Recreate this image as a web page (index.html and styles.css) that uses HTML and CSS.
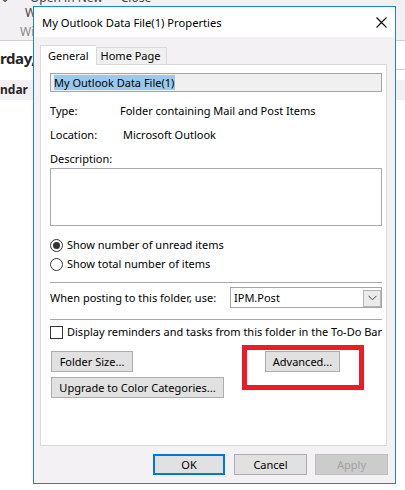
FILE: index.html
```html
<!DOCTYPE html>
<html>
<head>
<meta charset="utf-8">
<link rel="stylesheet" href="styles.css">
</head>
<body>
<div class="bg">
  <div class="bg-top">
    <div class="rb-row rb1"><span class="rb-a">⌄</span><span class="rb-b">Open in New</span><span class="rb-c">Close</span></div>
    <div class="rb-row rb2">W</div>
    <div class="rb-row rb3">Wi</div>
  </div>
  <div class="bg-date"><span class="date">rday,</span><div class="date-right"></div></div>
  <div class="bg-band"><span>ndar</span></div>
</div>

<div class="dialog">
  <div class="titlebar">
    <span class="title">My Outlook Data File(1) Properties</span>
    <svg class="close" width="11" height="11" viewBox="0 0 11 11"><path d="M0.5 0.5 L10.5 10.5 M10.5 0.5 L0.5 10.5" stroke="#000" stroke-width="1.1" fill="none"/></svg>
  </div>
  <div class="body">
    <div class="tabs">
      <div class="tab tab-active">General</div>
      <div class="tab tab-home">Home Page</div>
    </div>
    <div class="panel">
      <div class="namefield"><span class="sel">My Outlook Data File(1)</span></div>
      <div class="info-row r-type"><span class="lbl">Type:</span><span>Folder containing Mail and Post Items</span></div>
      <div class="info-row r-loc"><span class="lbl">Location:</span><span class="v-loc">Microsoft Outlook</span></div>
      <div class="info-row r-desc"><span>Description:</span></div>
      <div class="descbox"></div>
      <div class="radio-row r-rad1"><span class="radio on"><span class="dot"></span></span><span>Show number of unread items</span></div>
      <div class="radio-row r-rad2"><span class="radio"></span><span>Show total number of items</span></div>
      <div class="sep s1"></div>
      <div class="post-row">
        <span>When posting to this folder, use:</span>
        <div class="combo"><span class="combo-val">IPM.Post</span>
          <span class="combo-btn"><svg width="9" height="6" viewBox="0 0 9 6"><path d="M0.5 0.8 L4.5 4.8 L8.5 0.8" stroke="#444" stroke-width="1" fill="none"/></svg></span>
        </div>
      </div>
      <div class="sep s2"></div>
      <div class="check-row"><span class="checkbox"></span><span>Display reminders and tasks from this folder in the To-Do Bar</span></div>
      <div class="btn-row">
        <button class="btn b-size">Folder Size...</button>
        <button class="btn b-adv">Advanced...</button>
      </div>
      <button class="btn b-up">Upgrade to Color Categories...</button>
    </div>
  </div>
  <div class="footer">
    <button class="btn b-ok">OK</button>
    <button class="btn b-cancel">Cancel</button>
    <button class="btn b-apply">Apply</button>
  </div>
  <div class="redbox"></div>
</div>
</body>
</html>
```
FILE: styles.css
```css
html, body {
  margin: 0;
  padding: 0;
}
body {
  width: 405px;
  height: 490px;
  overflow: hidden;
  position: relative;
  background: #fff;
  font-family: "Noto Sans", "Segoe UI", sans-serif;
  font-size: 11px;
  color: #000;
}
.bg-top {
  height: 40px;
  background: #f3f0f3;
  border-bottom: 1px solid #d2cfd2;
  overflow: hidden;
}
.rb-row {
  height: 14px;
  line-height: 14px;
  white-space: nowrap;
  color: #444;
  font-size: 12px;
}
.rb1 {
  margin-top: -9px;
  display: flex;
}
.rb-b { margin-left: 20px; }
.rb-c { margin-left: 18px; }
.rb2 {
  margin-top: 1px;
  padding-left: 25px;
  color: #444;
}
.rb3 {
  margin-top: 5px;
  padding-left: 20px;
  color: #8a8a8a;
}
.bg-date {
  height: 39px;
  display: flex;
  align-items: flex-start;
}
.date {
  font-weight: bold;
  font-size: 15px;
  line-height: 20px;
  margin-top: 7px;
  letter-spacing: -0.4px;
  color: #262626;
  white-space: nowrap;
  width: 34px;
  overflow: hidden;
  flex: none;
}
.date-right {
  flex: 1;
  height: 28px;
  border-bottom: 1px solid #d2cfd2;
}
.bg-band {
  height: 20px;
  background: #f3f0f3;
  line-height: 20px;
  font-weight: bold;
  font-size: 12px;
  color: #262626;
}

/* dialog */
.dialog {
  position: absolute;
  left: 33px;
  top: 6px;
  width: 363px;
  height: 478px;
  box-sizing: border-box;
  border: 1px solid #1883d7;
  background: #f4f1f4;
}
.titlebar {
  height: 30px;
  background: #fff;
  display: flex;
  align-items: center;
  padding-left: 8px;
}
.title {
  font-size: 11.2px;
  line-height: 16px;
  margin-top: 1px;
}
.close {
  margin-left: auto;
  margin-right: 8px;
  display: block;
}
.body {
  padding: 8px 8px 0 6px;
}
.tabs {
  display: flex;
  align-items: flex-end;
  height: 20px;
  margin-bottom: -1px;
  position: relative;
  z-index: 1;
}
.tab {
  box-sizing: border-box;
  border: 1px solid #d9d9d9;
  border-bottom: none;
  background: #f0f0f0;
  height: 17px;
  line-height: 16px;
  margin-bottom: 1px;
  white-space: nowrap;
}
.tab-home {
  padding: 0 5px 0 4px;
}
.tab-active {
  height: 20px;
  margin-bottom: 0;
  background: #fff;
  padding: 0 7px 0 7px;
  line-height: 19px;
  border-right: none;
}
.panel {
  height: 382px;
  box-sizing: border-box;
  border: 1px solid #d9d9d9;
  background: #fff;
  padding: 8px 4px 0 9px;
}
.namefield {
  height: 19px;
  box-sizing: border-box;
  border: 1px solid #a5a5a5;
  background: #f0f0f0;
  padding-left: 3px;
  display: flex;
  align-items: center;
}
.sel {
  background: #99c9ef;
  line-height: 15px;
  padding-right: 1px;
}
.info-row {
  height: 16px;
  line-height: 16px;
  display: flex;
  white-space: nowrap;
}
.lbl {
  width: 70px;
  flex: none;
}
.v-loc { padding-left: 3px; }
.r-type { margin-top: 11px; }
.r-loc { margin-top: 8px; }
.r-desc { margin-top: 8px; }
.descbox {
  margin-top: 1px;
  height: 58px;
  box-sizing: border-box;
  border: 1px solid #a9a9b2;
  background: #fff;
}
.radio-row {
  height: 16px;
  line-height: 16px;
  display: flex;
  align-items: center;
  white-space: nowrap;
}
.r-rad1 { margin-top: 11px; }
.r-rad2 { margin-top: 3px; }
.radio {
  width: 13px;
  height: 13px;
  box-sizing: border-box;
  border: 1px solid #333;
  border-radius: 50%;
  margin-right: 4px;
  display: flex;
  align-items: center;
  justify-content: center;
  background: #fff;
  flex: none;
}
.dot {
  width: 7px;
  height: 7px;
  border-radius: 50%;
  background: #333;
}
.sep {
  height: 1px;
  background: #a8a8a8;
}
.s1 { margin-top: 10px; }
.s2 { margin-top: 11px; }
.post-row {
  margin-top: 4px;
  height: 21px;
  display: flex;
  align-items: center;
  white-space: nowrap;
}
.combo {
  margin-left: auto;
  width: 152px;
  height: 21px;
  box-sizing: border-box;
  border: 1px solid #a5a5a5;
  background: #fff;
  display: flex;
  align-items: center;
  padding-left: 3px;
}
.combo-val { flex: 1; }
.combo-btn {
  width: 18px;
  height: 17px;
  box-sizing: border-box;
  border: 1px solid #b4b4b4;
  background: #ebebeb;
  display: flex;
  align-items: center;
  justify-content: center;
  margin-top: 1px;
}
.combo-btn svg { display: block; }
.check-row {
  margin-top: 4px;
  height: 16px;
  line-height: 16px;
  display: flex;
  align-items: center;
  white-space: nowrap;
}
.checkbox {
  width: 13px;
  height: 13px;
  box-sizing: border-box;
  border: 1px solid #333;
  background: #fff;
  margin-right: 4px;
  flex: none;
}
.btn {
  height: 21px;
  box-sizing: border-box;
  border: 1px solid #adadad;
  background: #e1e1e1;
  font-family: "Noto Sans", "Segoe UI", sans-serif;
  font-size: 11px;
  color: #000;
  padding: 0;
  margin: 0;
  line-height: 18px;
  display: block;
}
.btn-row {
  margin-top: 11px;
  display: flex;
}
.b-size {
  width: 82px;
  margin-left: 1px;
}
.b-adv {
  width: 75px;
  margin-left: 132px;
}
.b-up {
  width: 173px;
  margin-left: 1px;
  margin-top: 5px;
}
.footer {
  display: flex;
  justify-content: flex-end;
  padding: 8px 7px 0 0;
}
.b-ok {
  width: 72px;
  border: 2px solid #0078d7;
}
.b-cancel {
  width: 73px;
  margin-left: 9px;
}
.b-apply {
  width: 73px;
  margin-left: 8px;
  background: #cccccc;
  border-color: #bfbfbf;
  color: #a0a0a0;
}
.redbox {
  position: absolute;
  left: 208px;
  top: 338px;
  width: 122px;
  height: 45px;
  box-sizing: border-box;
  border: 5px solid #ed1c24;
}
```
